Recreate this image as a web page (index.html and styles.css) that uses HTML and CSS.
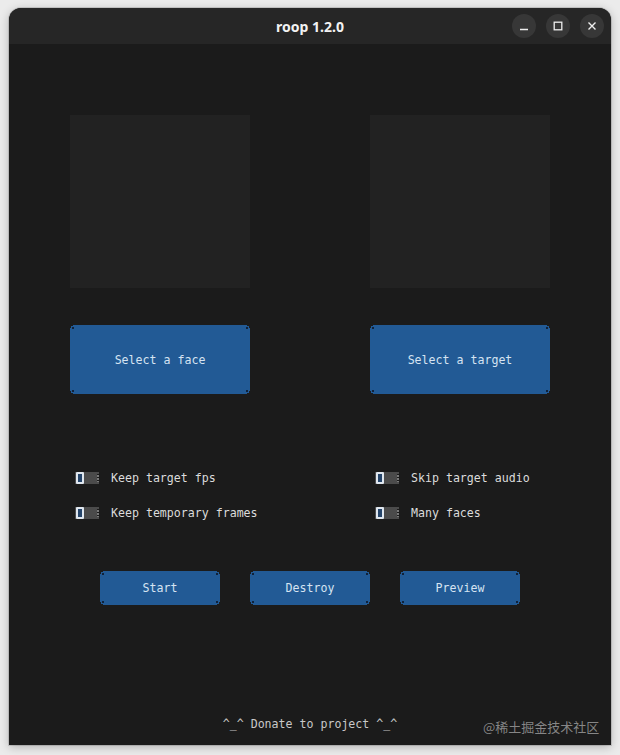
FILE: index.html
```html
<!DOCTYPE html>
<html>
<head>
    <title>roop 1.2.0</title>
    <link rel="stylesheet" href="styles.css">
</head>
<body>
    <div class="window">
        <div class="titlebar">
            <span class="title">roop 1.2.0</span>
            <div class="controls">
                <span class="ctl"><svg width="10" height="10" viewBox="0 0 10 10"><path d="M1 8.5h8" stroke="#eee" stroke-width="1.4"/></svg></span>
                <span class="ctl"><svg width="10" height="10" viewBox="0 0 10 10"><rect x="1.2" y="1.2" width="7.6" height="7.6" fill="none" stroke="#eee" stroke-width="1.3"/></svg></span>
                <span class="ctl"><svg width="10" height="10" viewBox="0 0 10 10"><path d="M1.5 1.5l7 7M8.5 1.5l-7 7" stroke="#eee" stroke-width="1.4"/></svg></span>
            </div>
        </div>

        <div class="content">
            <div class="grid">
                <div class="preview-box"></div>
                <div class="preview-box"></div>
                <button class="btn big">Select a face</button>
                <button class="btn big">Select a target</button>
            </div>

            <div class="options">
                <div class="opt"><span class="switch"><i></i></span>Keep target fps</div>
                <div class="opt"><span class="switch"><i></i></span>Skip target audio</div>
                <div class="opt"><span class="switch"><i></i></span>Keep temporary frames</div>
                <div class="opt"><span class="switch"><i></i></span>Many faces</div>
            </div>

            <div class="actions">
                <button class="btn small">Start</button>
                <button class="btn small">Destroy</button>
                <button class="btn small">Preview</button>
            </div>

            <div class="footer">^_^ Donate to project ^_^</div>
        </div>
    </div>
    <div class="watermark">@稀土掘金技术社区</div>
</body>
</html>
```

FILE: styles.css
```css
body {
    margin: 0;
    background: #ebebeb;
    font-family: "DejaVu Sans Mono", monospace;
    width: 620px;
    height: 755px;
    overflow: hidden;
    position: relative;
}
.window {
    margin: 8px 9px 0 9px;
    width: 602px;
    height: 737px;
    background: #1b1b1b;
    border-radius: 12px 12px 0 0;
    box-shadow: 0 2px 10px rgba(0, 0, 0, 0.25), 0 0 0 1px rgba(0, 0, 0, 0.12);
    overflow: hidden;
    display: flex;
    flex-direction: column;
}
.titlebar {
    height: 36px;
    background: #262626;
    position: relative;
    display: flex;
    align-items: center;
    justify-content: center;
}
.title {
    font-family: "Noto Sans", "Open Sans", sans-serif;
    font-weight: bold;
    font-size: 14px;
    color: #f2f2f2;
}
.controls {
    position: absolute;
    right: 7px;
    top: 6px;
    display: flex;
    gap: 10px;
}
.ctl {
    width: 24px;
    height: 24px;
    border-radius: 50%;
    background: #373737;
    display: flex;
    align-items: center;
    justify-content: center;
}
.content {
    flex: 1;
    display: flex;
    flex-direction: column;
    align-items: center;
    padding-top: 71px;
    color: #dcdcdc;
    font-size: 11.6px;
}
.grid {
    display: grid;
    grid-template-columns: 180px 180px;
    column-gap: 120px;
    row-gap: 37px;
}
.preview-box {
    height: 173px;
    background: #222222;
}
.btn {
    font-family: "DejaVu Sans Mono", monospace;
    font-size: 11.6px;
    color: #d6e4f2;
    border: none;
    padding: 0;
    background:
        linear-gradient(#10223a, #10223a) 2px 2px / 2px 2px no-repeat,
        linear-gradient(#10223a, #10223a) calc(100% - 2px) 2px / 2px 2px no-repeat,
        linear-gradient(#10223a, #10223a) 2px calc(100% - 2px) / 2px 2px no-repeat,
        linear-gradient(#10223a, #10223a) calc(100% - 2px) calc(100% - 2px) / 2px 2px no-repeat,
        #225a95;
    clip-path: polygon(3px 0, calc(100% - 3px) 0, calc(100% - 3px) 1px, calc(100% - 1px) 1px, calc(100% - 1px) 3px, 100% 3px,
        100% calc(100% - 3px), calc(100% - 1px) calc(100% - 3px), calc(100% - 1px) calc(100% - 1px), calc(100% - 3px) calc(100% - 1px), calc(100% - 3px) 100%,
        3px 100%, 3px calc(100% - 1px), 1px calc(100% - 1px), 1px calc(100% - 3px), 0 calc(100% - 3px),
        0 3px, 1px 3px, 1px 1px, 3px 1px);
}
.btn.big {
    height: 69px;
}
.btn.small {
    width: 120px;
    height: 34px;
}
.options {
    margin-top: 74px;
    width: 480px;
    display: grid;
    grid-template-columns: 300px 180px;
    row-gap: 15px;
}
.opt {
    display: flex;
    align-items: center;
    height: 20px;
    padding-left: 5px;
    gap: 12px;
    white-space: nowrap;
}
.switch {
    width: 24px;
    height: 12px;
    background: #4b4b4b;
    position: relative;
    box-sizing: border-box;
}
.switch::after {
    content: "";
    position: absolute;
    right: 0;
    top: 2px;
    width: 2px;
    height: 8px;
    background: repeating-linear-gradient(#1b1b1b 0 1px, #7a7a7a 1px 3px);
}
.switch i {
    position: absolute;
    left: 1px;
    top: 0;
    width: 8px;
    height: 12px;
    box-sizing: border-box;
    border: 2px solid #dfe6ee;
    background: #24446a;
    border-radius: 1px;
}
.actions {
    margin-top: 48px;
    display: flex;
    gap: 30px;
}
.footer {
    margin-top: auto;
    margin-bottom: 14px;
    color: #c8c8c8;
}
.watermark {
    position: absolute;
    left: 483px;
    top: 717px;
    font-family: "Noto Sans CJK SC", sans-serif;
    font-size: 13px;
    color: rgba(170, 170, 170, 0.75);
}
```
